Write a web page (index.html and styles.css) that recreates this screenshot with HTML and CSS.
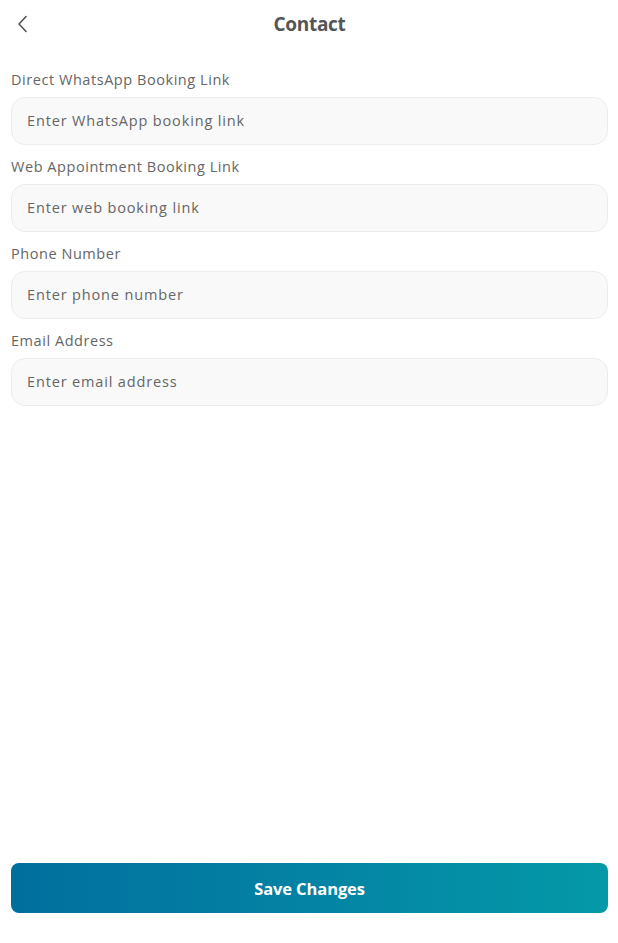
FILE: index.html
```html
<!DOCTYPE html>
<html lang="en">
<head>
<meta charset="utf-8">
<title>Contact</title>
<link rel="stylesheet" href="styles.css">
</head>
<body>
<div class="screen">
  <header class="topbar">
    <button class="back" aria-label="Back">
      <svg width="12" height="18" viewBox="0 0 12 18"><path d="M10 1.5 L3 9 L10 16.5" fill="none" stroke="#555" stroke-width="1.6" stroke-linecap="round" stroke-linejoin="round"/></svg>
    </button>
    <h1 class="title">Contact</h1>
  </header>
  <main class="form">
    <div class="field">
      <label class="label">Direct WhatsApp Booking Link</label>
      <div class="input">Enter WhatsApp booking link</div>
    </div>
    <div class="field">
      <label class="label">Web Appointment Booking Link</label>
      <div class="input">Enter web booking link</div>
    </div>
    <div class="field">
      <label class="label">Phone Number</label>
      <div class="input">Enter phone number</div>
    </div>
    <div class="field">
      <label class="label">Email Address</label>
      <div class="input">Enter email address</div>
    </div>
  </main>
  <footer class="footer">
    <button class="save">Save Changes</button>
  </footer>
</div>
</body>
</html>
```

FILE: styles.css
```css
* { box-sizing: border-box; }
html, body { margin: 0; padding: 0; background: #fff; }
body { font-family: "Open Sans", "Noto Sans", sans-serif; color: #555; }
.screen { width: 618px; height: 943px; display: flex; flex-direction: column; padding: 0 10px 0 11px; }
.topbar { height: 48px; display: flex; align-items: center; justify-content: center; position: relative; }
.back { position: absolute; left: 5px; top: 15px; background: none; border: 0; padding: 0; width: 12px; height: 18px; display: flex; }
.title { margin: 0; font-size: 19px; font-weight: 700; color: #555; letter-spacing: -0.3px; }
.form { display: flex; flex-direction: column; gap: 11px; padding-top: 21px; }
.field { display: flex; flex-direction: column; gap: 7px; }
.label { font-size: 14.5px; color: #666; line-height: 21px; height: 21px; letter-spacing: 0.55px; }
.input { height: 48px; border: 1px solid #ececec; background: #f9f9f9; border-radius: 14px; padding: 0 15px 1px; display: flex; align-items: center; font-size: 14.5px; color: #666; letter-spacing: 0.85px; }
.footer { margin-top: auto; padding-bottom: 30px; }
.save { width: 100%; height: 50px; border: 0; border-radius: 8px; background: linear-gradient(90deg, #016f9e 0%, #0483a4 50%, #0499a8 100%); color: #fff; font-family: "Open Sans", sans-serif; font-weight: 700; font-size: 16.5px; letter-spacing: -0.1px; }
```
